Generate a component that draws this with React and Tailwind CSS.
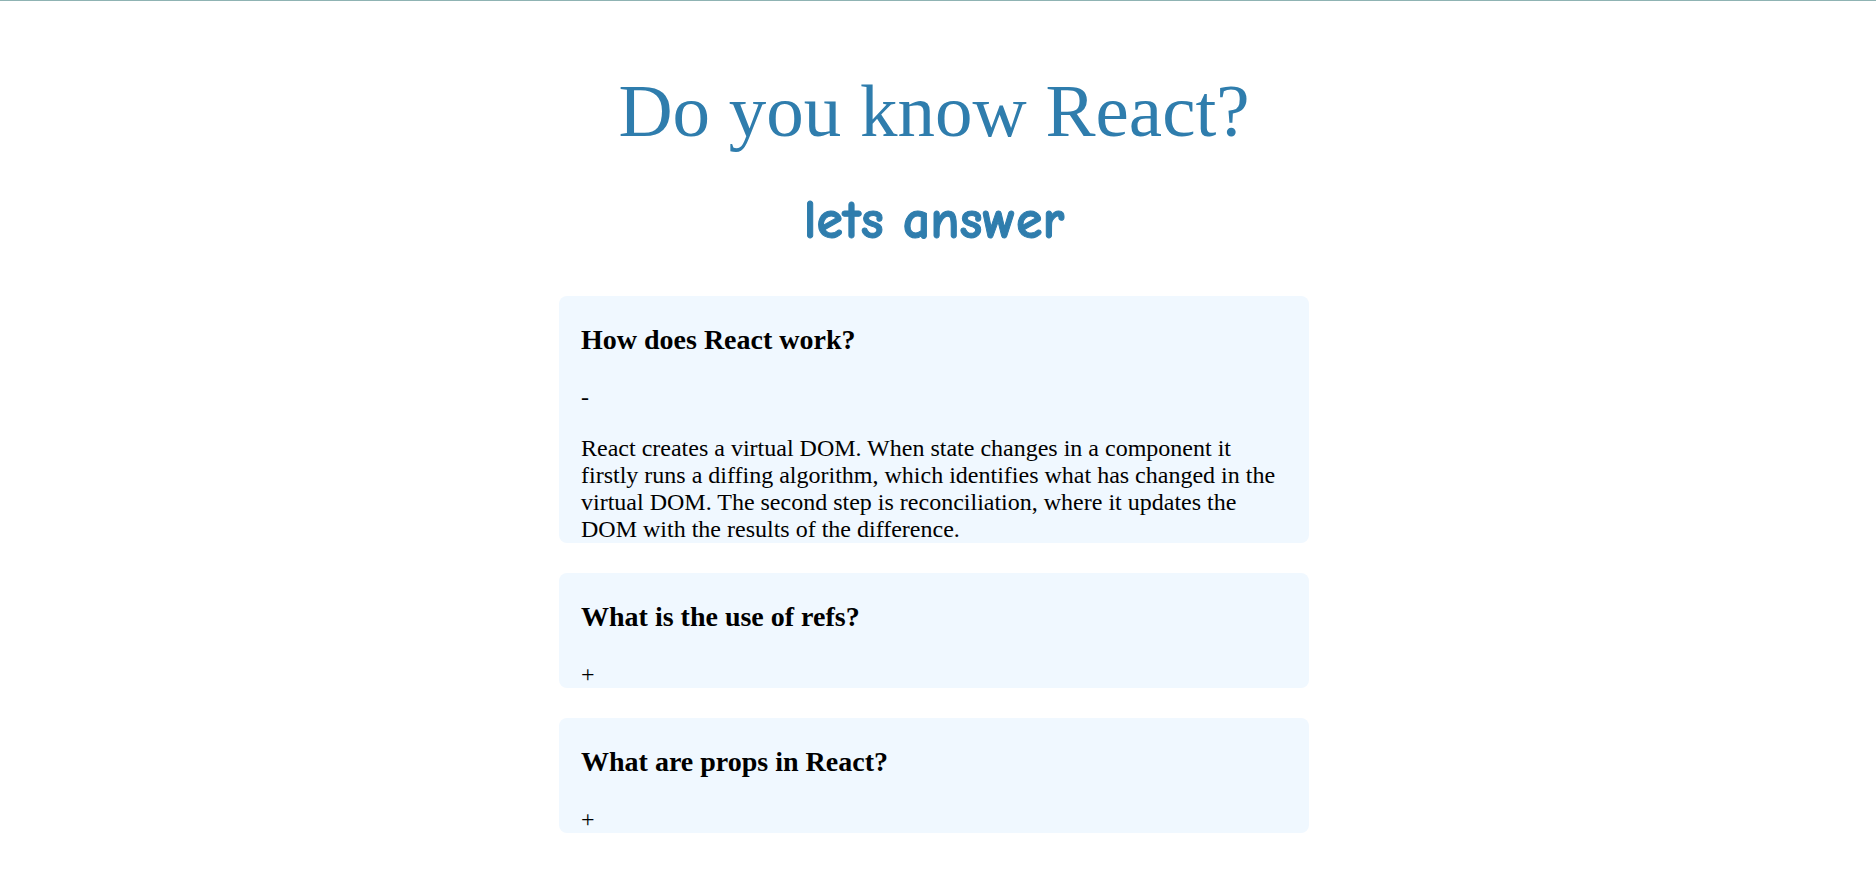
import { useState } from "react";

const questions = [
  {
    id: "work",
    title: "How does React work?",
    info: "React creates a virtual DOM. When state changes in a component it firstly runs a diffing algorithm, which identifies what has changed in the virtual DOM. The second step is reconciliation, where it updates the DOM with the results of the difference.",
  },
  {
    id: "refs",
    title: "What is the use of refs?",
    info: "Refs provide a way to access DOM nodes or React elements created in the render method.",
  },
  {
    id: "props",
    title: "What are props in React?",
    info: "Props are the inputs of a component, passed down from its parent.",
  },
];

function Question({ id, title, info, defaultOpen }) {
  const [open, setOpen] = useState(defaultOpen);
  return (
    <article className="rounded-lg bg-[#f0f8ff] px-[22px] pt-7">
      <h3 id={`${id}-title`} className="mb-7 text-[28px] leading-8 font-bold">
        {title}
      </h3>
      <button
        type="button"
        aria-expanded={open}
        aria-labelledby={`${id}-title`}
        onClick={() => setOpen(!open)}
        className="block cursor-pointer text-2xl leading-[27px]"
      >
        {open ? "-" : "+"}
      </button>
      {open && <p className="mt-6 text-2xl leading-[27px]">{info}</p>}
    </article>
  );
}

export default function App() {
  return (
    <div className="min-h-screen border-t border-[#8fb3b3] bg-white pr-2 pb-10 font-['Liberation_Serif',serif] text-black">
      <header className="pt-[67px] text-center text-[#2f7dad]">
        <h1 className="text-[75px] leading-[86px]">Do you know React?</h1>
        <h2 className="mt-[30px] font-['Comic_Sans_MS','Comic_Neue','Noto_Sans',sans-serif] text-[54px] leading-[74px] font-bold [-webkit-text-stroke:1px_#2f7dad]">
          lets answer
        </h2>
      </header>
      <main className="mx-auto mt-[38px] flex w-full max-w-[750px] flex-col gap-[30px]">
        {questions.map((question, index) => (
          <Question key={question.id} {...question} defaultOpen={index === 0} />
        ))}
      </main>
    </div>
  );
}
